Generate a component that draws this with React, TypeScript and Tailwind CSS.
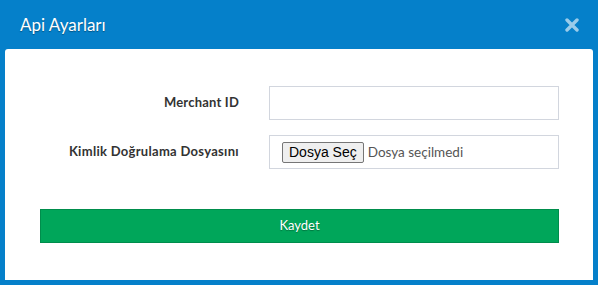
export default function App() {
  return (
    <div className="flex h-[285px] w-[598px] flex-col bg-[#0580ca] font-['Lato',sans-serif]">
      <header className="flex h-[49px] shrink-0 items-center justify-between pl-[20px] pr-[19px]">
        <h1 className="text-[17px] leading-none text-white [text-shadow:0_1px_1px_rgba(0,0,0,0.35)]">Api Ayarları</h1>
        <button type="button" aria-label="Kapat" className="mt-[1px] text-white/60">
          <svg width="14" height="14" viewBox="0 0 14 14">
            <path d="M2 2 L12 12 M12 2 L2 12" stroke="currentColor" strokeWidth="3.4" strokeLinecap="round" />
          </svg>
        </button>
      </header>
      <div className="mx-[5px] h-[231px] rounded-t-[3px] bg-white pl-[35px] pt-[37px]">
        <div className="flex flex-col gap-[15px]">
          <div className="flex items-center">
            <label className="w-[199px] text-right text-[13px] font-bold tracking-[0.2px] text-[#333]">Merchant ID</label>
            <input
              type="text"
              className="ml-[30px] h-[34px] w-[290px] border border-[#d2d6de] px-3 text-[13px] outline-none"
            />
          </div>
          <div className="flex items-center">
            <label className="w-[199px] text-right text-[13px] font-bold tracking-[0.3px] text-[#333]">
              Kimlik Doğrulama Dosyasını
            </label>
            <div className="ml-[30px] flex h-[34px] w-[290px] items-center border border-[#d2d6de] pl-[12px]">
              <span className="rounded-[2px] border border-[#767676] bg-[#efefef] px-[6px] py-[1px] font-['Liberation_Sans',sans-serif] text-[14px] leading-[17px] text-black">
                Dosya Seç
              </span>
              <span className="ml-[4px] text-[13.5px] text-[#555]">Dosya seçilmedi</span>
            </div>
          </div>
        </div>
        <button
          type="button"
          className="mt-[40px] h-[34px] w-[519px] border border-[#008d4c] bg-[#00a65a] text-[13px] text-white [text-shadow:0_1px_1px_rgba(0,0,0,0.3)]"
        >
          Kaydet
        </button>
      </div>
    </div>
  );
}
